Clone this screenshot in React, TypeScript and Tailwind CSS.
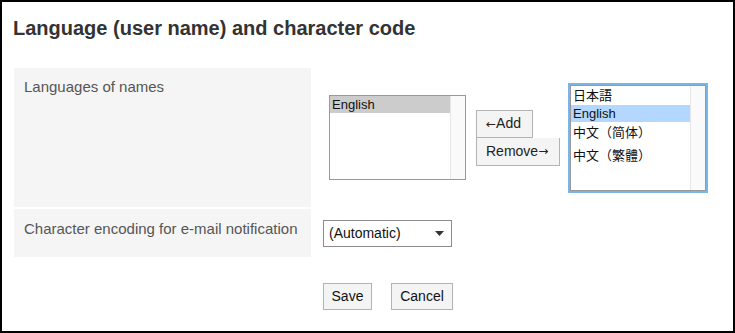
const font = "font-['Liberation_Sans','Noto_Sans_CJK_JP',sans-serif]";

function ListBox({
  items,
  selected,
  selectedBg,
}: {
  items: { label: string; h: string }[];
  selected: number;
  selectedBg: string;
}) {
  return (
    <div className="flex h-full w-full">
      <div className="flex-1">
        {items.map((item, i) => (
          <div
            key={item.label}
            className={`flex items-center pl-[2px] text-[13px] leading-[15px] text-[#111] ${item.h} ${
              i === selected ? selectedBg : ""
            }`}
          >
            {item.label}
          </div>
        ))}
      </div>
      <div className="w-[15px] border-l border-[#e6e6e6] bg-[#fafafa]" />
    </div>
  );
}

const arrow = "font-['DejaVu_Sans'] text-[12px] leading-none";

export default function App() {
  return (
    <div className={`${font} h-[333px] w-[735px] border-2 border-black bg-white pl-[12px] pt-[15px]`}>
      <h1 className="-ml-px text-[20px] font-bold leading-[23px] text-[#333]">
        Language (user name) and character code
      </h1>

      <div className="mt-[28px] flex flex-col gap-[2px]">
        {/* Languages of names */}
        <div className="flex h-[139px]">
          <div className="w-[297px] bg-[#f5f5f5] pl-[10px] pt-[10px] text-[15px] leading-[18px] text-[#555]">
            Languages of names
          </div>
          <div className="flex items-center pl-[18px]">
            <div className="h-[85px] w-[137px] border border-[#999] bg-white">
              <ListBox
                items={[{ label: "English", h: "h-[17px]" }]}
                selected={0}
                selectedBg="bg-[#cccccc]"
              />
            </div>

            <div className="ml-[10px] flex w-[84px] flex-col items-start text-[14px] text-[#222]">
              <button className="flex h-[28px] w-[57px] items-center border border-[#b3b3b3] bg-[#f4f4f4] pl-[9px]">
                <span className={arrow}>←</span>Add
              </button>
              <button className="flex h-[28px] w-[84px] items-center border border-t-0 border-[#b3b3b3] bg-[#f4f4f4] pl-[9px]">
                Remove<span className={arrow}>→</span>
              </button>
            </div>

            <div className="ml-[8px] border-2 border-[#79b5e6]">
              <div className="h-[106px] w-[136px] border border-[#999] bg-white">
                <ListBox
                  items={[
                    { label: "日本語", h: "h-[19px]" },
                    { label: "English", h: "h-[17px]" },
                    { label: "中文（简体）", h: "h-[22px]" },
                    { label: "中文（繁體）", h: "h-[24px]" },
                  ]}
                  selected={1}
                  selectedBg="bg-[#b3d7ff]"
                />
              </div>
            </div>
          </div>
        </div>

        {/* Character encoding */}
        <div className="flex h-[48px]">
          <div className="w-[297px] bg-[#f5f5f5] pl-[10px] pt-[11px] text-[15px] leading-[18px] text-[#555]">
            Character encoding for e-mail notification
          </div>
          <div className="flex items-center pl-[12px]">
            <div className="flex h-[27px] w-[129px] items-center justify-between border border-[#8c8c8c] bg-white pl-[5px] pr-[7px] text-[14px] text-[#111]">
              <span>(Automatic)</span>
              <svg width="9" height="5" viewBox="0 0 9 5">
                <path d="M0 0h9L4.5 5z" fill="#333" />
              </svg>
            </div>
          </div>
        </div>
      </div>

      <div className="mt-[26px] flex pl-[309px] text-[14px] text-[#111]">
        <button className="h-[27px] w-[49px] border border-[#b3b3b3] bg-[#f4f4f4]">Save</button>
        <button className="ml-[19px] h-[27px] w-[62px] border border-[#b3b3b3] bg-[#f4f4f4]">Cancel</button>
      </div>
    </div>
  );
}
